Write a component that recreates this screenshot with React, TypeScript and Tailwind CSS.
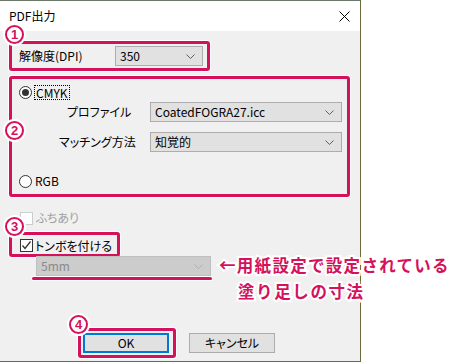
import React from "react";

const Chevron = ({ color = "#606060" }: { color?: string }) => (
  <svg width="9" height="5" viewBox="0 0 9 5" className="shrink-0">
    <polyline points="0.5,0.5 4.5,4.5 8.5,0.5" fill="none" stroke={color} strokeWidth="1" />
  </svg>
);

const Select = ({ text, w, disabled }: { text: string; w: string; disabled?: boolean }) => (
  <div
    className={`${w} h-[20px] flex items-center justify-between pl-[4px] pr-[7px] border ${
      disabled ? "bg-[#cccccc] border-[#bfbfbf] text-[#8a8a8a]" : "bg-[#e1e1e1] border-[#adadad] text-black"
    }`}
  >
    <span>{text}</span>
    <Chevron color={disabled ? "#b0b0b0" : "#606060"} />
  </div>
);

const Radio = ({ checked }: { checked?: boolean }) => (
  <div className="w-[13px] h-[13px] rounded-full border border-[#333333] bg-white flex items-center justify-center shrink-0">
    {checked && <div className="w-[7px] h-[7px] rounded-full bg-[#333333]" />}
  </div>
);

const Circle = ({ n, cls }: { n: string; cls: string }) => (
  <div
    className={`absolute ${cls} w-[19px] h-[19px] rounded-full border-2 border-[#d5115b] bg-white text-[#d5115b] font-bold text-[13px] leading-none flex items-center justify-center shadow-[0_0_0_2px_white] font-['Liberation_Sans',sans-serif]`}
  >
    {n}
  </div>
);

const boxCls = "border-[3px] border-[#d5115b] rounded-[3px] shadow-[0_0_0_1px_white]";

export default function App() {
  return (
    <div className="relative w-[457px] h-[362px] bg-white flex font-['Noto_Sans_CJK_JP',sans-serif] text-[12px] [font-feature-settings:'palt'] text-black overflow-hidden">
      <div className="w-[361px] h-[362px] flex flex-col border-t border-t-[#6a786a] border-r border-b border-r-[#6b6a3a] border-b-[#6b6a3a]">
        <div className="h-[30px] bg-white flex items-center justify-between pl-[9px] pr-[10px] shrink-0">
          <span>PDF出力</span>
          <svg width="11" height="11" viewBox="0 0 11 11">
            <path d="M0.5 0.5 L10.5 10.5 M10.5 0.5 L0.5 10.5" stroke="#000" strokeWidth="1" />
          </svg>
        </div>
        <div className="flex-1 bg-[#f0f0f0] flex flex-col pl-[9px] pt-[10px]">
          {/* Box 1 */}
          <div className={`${boxCls} w-[201px] h-[30px] flex items-center`}>
            <span className="w-[103px] pl-[7px]">解像度(DPI)</span>
            <Select text="350" w="w-[88px]" />
          </div>
          {/* Box 2 */}
          <div className={`${boxCls} mt-[5px] w-[341px] h-[121px] flex flex-col`}>
            <div className="mt-[5px] h-[16px] flex items-center pl-[7px]">
              <Radio checked />
              <span className="ml-[2px] px-[1px] border border-dotted border-black leading-[13px]">CMYK</span>
            </div>
            <div className="mt-[2px] flex items-center">
              <span className="w-[138px] pl-[55px]">プロファイル</span>
              <Select text="CoatedFOGRA27.icc" w="w-[192px]" />
            </div>
            <div className="mt-[10px] flex items-center">
              <span className="w-[138px] pl-[47px]">マッチング方法</span>
              <Select text="知覚的" w="w-[192px]" />
            </div>
            <div className="mt-[21px] h-[16px] flex items-center pl-[7px]">
              <Radio />
              <span className="ml-[3px]">RGB</span>
            </div>
          </div>
          {/* ふちあり */}
          <div className="mt-[13px] h-[16px] flex items-center pl-[11px] text-[#a0a0a0]">
            <div className="w-[13px] h-[13px] border border-[#cccccc] bg-white" />
            <span className="ml-[3px]">ふちあり</span>
          </div>
          {/* Box 3 */}
          <div className={`${boxCls} mt-[6px] w-[111px] h-[25px] flex items-center pl-[8px] pt-[2px]`}>
            <div className="w-[13px] h-[13px] border border-[#333333] bg-white flex items-center justify-center">
              <svg width="11" height="11" viewBox="0 0 11 11">
                <polyline points="1.5,5.5 4,8.5 9.5,1.5" fill="none" stroke="#333" strokeWidth="1.3" />
              </svg>
            </div>
            <span className="ml-[2px]">トンボを付ける</span>
          </div>
          <div className="ml-[27px] mt-[-1px]">
            <Select text="5mm" w="w-[175px]" disabled />
          </div>
          <div className="ml-[23px] mt-[1px] w-[180px] h-[3px] bg-[#d5115b] rounded-full shadow-[0_0_0_1px_white]" />
          {/* Buttons */}
          <div className="mt-[48px] flex items-start">
            <div className={`${boxCls} ml-[69px] w-[98px] h-[30px] pl-[2px] pt-[2px]`}>
              <div className="w-[86px] h-[20px] bg-[#e1e1e1] border-2 border-[#0078d7] flex items-center justify-center">
                OK
              </div>
            </div>
            <div className="ml-[13px] mt-[5px] w-[86px] h-[20px] bg-[#e1e1e1] border border-[#adadad] flex items-center justify-center">
              キャンセル
            </div>
          </div>
        </div>
      </div>

      <Circle n="1" cls="left-[5px] top-[25px]" />
      <Circle n="2" cls="left-[5px] top-[121px]" />
      <Circle n="3" cls="left-[5px] top-[217px]" />
      <Circle n="4" cls="left-[69px] top-[315px]" />

      <div className="absolute left-[219px] top-[252px] text-[16.5px] leading-[26px] font-bold text-[#d5115b] [-webkit-text-stroke:4px_white] [paint-order:stroke_fill] whitespace-nowrap [font-feature-settings:normal]">
        <div className="tracking-[1.3px]">←用紙設定で設定されている</div>
        <div className="pl-[19px] tracking-[1.6px]">塗り足しの寸法</div>
      </div>
    </div>
  );
}
